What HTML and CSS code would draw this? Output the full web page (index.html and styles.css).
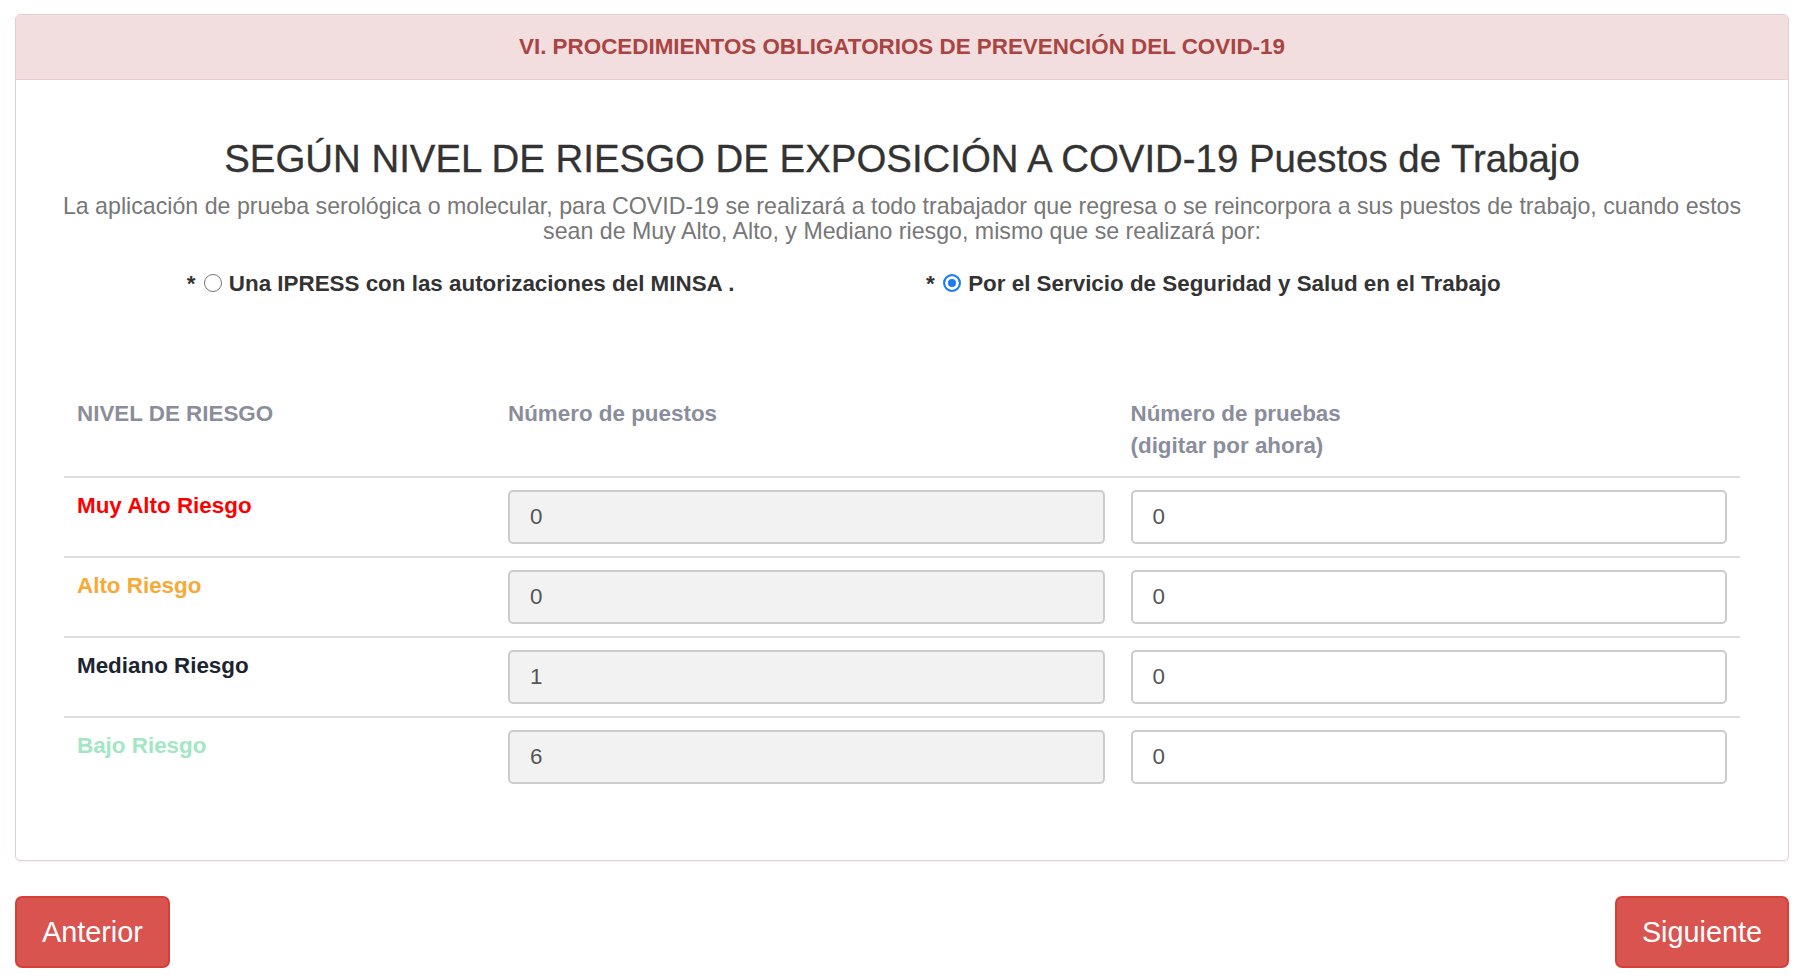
FILE: index.html
```html
<!DOCTYPE html>
<html lang="es">
<head>
<meta charset="utf-8">
<title>Procedimientos COVID-19</title>
<link rel="stylesheet" href="styles.css">
</head>
<body>
<div class="page">
  <section class="panel">
    <header class="panel-heading">VI. PROCEDIMIENTOS OBLIGATORIOS DE PREVENCIÓN DEL COVID-19</header>
    <div class="panel-body">
      <h2 class="title">SEGÚN NIVEL DE RIESGO DE EXPOSICIÓN A COVID-19 Puestos de Trabajo</h2>
      <p class="lead">La aplicación de prueba serológica o molecular, para COVID-19 se realizará a todo trabajador que regresa o se reincorpora a sus puestos de trabajo, cuando estos sean de Muy Alto, Alto, y Mediano riesgo, mismo que se realizará por:</p>
      <div class="options">
        <label class="option option-left">* <input type="radio" name="via" class="radio"> Una IPRESS con las autorizaciones del MINSA .</label>
        <label class="option option-right">* <input type="radio" name="via" class="radio" checked> Por el Servicio de Seguridad y Salud en el Trabajo</label>
      </div>
      <table class="risk-table">
        <thead>
          <tr>
            <th class="col-level">NIVEL DE RIESGO</th>
            <th class="col-num">Número de puestos</th>
            <th class="col-num">Número de pruebas<br>(digitar por ahora)</th>
          </tr>
        </thead>
        <tbody>
          <tr>
            <td class="level level-muy-alto">Muy Alto Riesgo</td>
            <td><input class="field field-readonly" type="text" value="0" readonly></td>
            <td><input class="field" type="text" value="0"></td>
          </tr>
          <tr>
            <td class="level level-alto">Alto Riesgo</td>
            <td><input class="field field-readonly" type="text" value="0" readonly></td>
            <td><input class="field" type="text" value="0"></td>
          </tr>
          <tr>
            <td class="level level-mediano">Mediano Riesgo</td>
            <td><input class="field field-readonly" type="text" value="1" readonly></td>
            <td><input class="field" type="text" value="0"></td>
          </tr>
          <tr>
            <td class="level level-bajo">Bajo Riesgo</td>
            <td><input class="field field-readonly" type="text" value="6" readonly></td>
            <td><input class="field" type="text" value="0"></td>
          </tr>
        </tbody>
      </table>
    </div>
  </section>
  <div class="actions">
    <button class="btn" type="button">Anterior</button>
    <button class="btn" type="button">Siguiente</button>
  </div>
</div>
</body>
</html>
```
FILE: styles.css
```css
html, body {
  margin: 0;
  padding: 0;
  background: #fff;
}
body {
  font-family: "Liberation Sans", Arial, Helvetica, sans-serif;
  color: #333;
}
.page {
  padding: 14px 9px 0 15px;
}
.panel {
  border: 1px solid #ebccd1;
  border-radius: 5px;
  background: #fff;
  box-shadow: 0 1px 1px rgba(0,0,0,0.05);
}
.panel-heading {
  background: #f2dede;
  color: #a94442;
  border-bottom: 1px solid #ebccd1;
  border-radius: 4px 4px 0 0;
  height: 64px;
  line-height: 64px;
  text-align: center;
  font-weight: bold;
  font-size: 22.4px;
}
.panel-body {
  padding: 59px 0 64px;
}
.title {
  margin: 0;
  text-align: center;
  font-weight: normal;
  font-size: 38.4px;
  line-height: 40px;
  color: #333;
  -webkit-text-stroke: 0.3px #333;
}
.lead {
  margin: 15px 36px 0;
  text-align: center;
  color: #777;
  font-size: 23.2px;
  line-height: 24.5px;
}
.options {
  display: grid;
  grid-template-columns: 1fr 1fr;
  margin-top: 26px;
  font-weight: bold;
  font-size: 22.4px;
  line-height: 30px;
}
.option-left {
  text-align: center;
  padding-left: 3px;
}
.option-right {
  padding-left: 24px;
}
.radio {
  appearance: none;
  -webkit-appearance: none;
  width: 18px;
  height: 18px;
  margin: 0 1px 0 2px;
  border: 1px solid #767676;
  border-radius: 50%;
  background: #fff;
  vertical-align: -1px;
}
.radio:checked {
  border: 2px solid #1a7cf5;
  background: #1a7cf5;
  box-shadow: inset 0 0 0 3px #fff;
}
.risk-table {
  margin: 86px 48px 0 48px;
  width: calc(100% - 96px);
  border-collapse: collapse;
  font-size: 22.4px;
}
.risk-table th {
  text-align: left;
  color: #8a8d9c;
  font-weight: bold;
  line-height: 32px;
  padding: 13px 13px 14px;
  vertical-align: top;
  border-bottom: 2px solid #ddd;
}
.col-level {
  width: 405px;
}
.risk-table td {
  padding: 12px 13px 12px;
  vertical-align: top;
  border-top: 2px solid #ddd;
}
.risk-table tbody tr:first-child td {
  border-top: 0;
}
.level {
  font-weight: bold;
  line-height: 32px;
}
.level-muy-alto { color: #ff0000; }
.level-alto { color: #f7a935; }
.level-mediano { color: #1c2331; }
.level-bajo { color: #a3e6c4; }
.field {
  box-sizing: border-box;
  display: block;
  width: 100%;
  height: 54px;
  padding: 0 20px;
  border: 2px solid #ccc;
  border-radius: 5px;
  background: #fff;
  color: #555;
  font-family: inherit;
  font-size: 22.4px;
  outline: none;
}
.field-readonly {
  background: #f2f2f2;
}
.actions {
  display: flex;
  justify-content: space-between;
  margin-top: 35px;
}
.btn {
  height: 72px;
  padding: 0 25px;
  border: 2px solid #d43f3a;
  border-radius: 7px;
  background: #d9534f;
  color: #fff;
  font-family: inherit;
  font-size: 28.8px;
  cursor: pointer;
}
```
